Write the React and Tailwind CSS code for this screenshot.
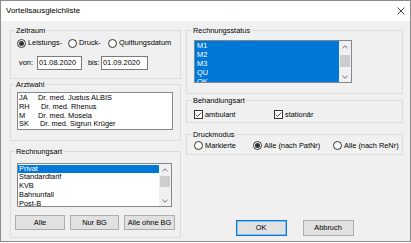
import React from "react";

const GroupBox = ({ title, className = "", pl = "pl-[6px]", children }) => (
  <fieldset className={`border border-[#dcdcdc] ${pl} ${className}`}>
    <legend className="ml-[-2px] px-[1px] leading-[9px]">{title}</legend>
    {children}
  </fieldset>
);

const Radio = ({ checked }) => (
  <span className="w-[9px] h-[9px] rounded-full border border-[#333] bg-white flex items-center justify-center shrink-0">
    {checked && <span className="w-[5px] h-[5px] rounded-full bg-[#333]" />}
  </span>
);

const RadioItem = ({ checked, label, className = "" }) => (
  <div className={`flex items-center gap-[2px] ${className}`}>
    <Radio checked={checked} />
    <span>{label}</span>
  </div>
);

const CheckItem = ({ label, className = "" }) => (
  <div className={`flex items-center gap-[2px] ${className}`}>
    <span className="w-[9px] h-[9px] border border-[#333] bg-white flex items-center justify-center shrink-0">
      <svg width="7" height="7" viewBox="0 0 7 7">
        <polyline points="0.8,3.6 2.6,5.4 6.2,1.6" fill="none" stroke="#333" strokeWidth="0.9" />
      </svg>
    </span>
    <span>{label}</span>
  </div>
);

const TextBox = ({ value, className = "" }) => (
  <div className={`h-[14px] bg-white border border-[#7a7a7a] flex items-center pl-[1px] ${className}`}>
    {value}
  </div>
);

const Button = ({ label, primary, className = "" }) => (
  <button
    className={`bg-[#e1e1e1] border flex items-center justify-center ${
      primary ? "border-[#0078d7] shadow-[inset_0_0_0_1px_#8cc0ec]" : "border-[#adadad]"
    } ${className}`}
  >
    {label}
  </button>
);

const Chevron = ({ up }) => (
  <svg width="6" height="4" viewBox="0 0 6 4">
    <polyline
      points={up ? "0.5,3.2 3,0.8 5.5,3.2" : "0.5,0.8 3,3.2 5.5,0.8"}
      fill="none"
      stroke="#606060"
      strokeWidth="0.9"
    />
  </svg>
);

const ScrollBar = ({ thumbMt, thumbH }) => (
  <div className="w-[12px] bg-[#f0f0f0] flex flex-col items-center">
    <div className="h-[11px] flex items-center justify-center">
      <Chevron up />
    </div>
    <div className="w-[10px] bg-[#cdcdcd]" style={{ marginTop: thumbMt, height: thumbH }} />
    <div className="flex-1" />
    <div className="h-[10px] flex items-center justify-center">
      <Chevron />
    </div>
  </div>
);

const doctors = [
  { code: "JA", name: "Dr. med. Justus ALBIS", ml: "ml-0" },
  { code: "RH", name: "Dr. med. Rhenus", ml: "ml-[3px]" },
  { code: "M", name: "Dr. med. Mosela", ml: "ml-0" },
  { code: "SK", name: "Dr. med. Sigrun Krüger", ml: "ml-[2px]" },
];

const arten = ["Privat", "Standardtarif", "KVB", "Bahnunfall", "Post-B"];
const status = ["M1", "M2", "M3", "QU", "OK"];

export default function App() {
  return (
    <div className="w-[411px] h-[242px] border border-[#8c8c8c] flex flex-col bg-[#f0f0f0] text-black text-[7.4px] font-['Liberation_Sans',Arial,sans-serif]">
      <div className="h-[20px] bg-white flex items-center justify-between pl-[5px] pr-[5px]">
        <span className="text-[8px]">Vorteilsausgleichliste</span>
        <svg width="8" height="8" viewBox="0 0 8 8">
          <path d="M0.5 0.5 L7.5 7.5 M7.5 0.5 L0.5 7.5" stroke="#333" strokeWidth="0.9" />
        </svg>
      </div>

      <div className="flex-1 flex gap-[5px] pl-[9px] pt-[5px] pb-[3px]">
        {/* left column */}
        <div className="w-[171px] flex flex-col">
          <GroupBox title="Zeitraum" className="h-[53px]">
            <div className="flex items-center h-[10px] mt-[3px]">
              <RadioItem checked label="Leistungs-" className="w-[51px]" />
              <RadioItem label="Druck-" className="w-[40px]" />
              <RadioItem label="Quittungsdatum" />
            </div>
            <div className="flex items-center h-[14px] mt-[8px]">
              <span className="w-[18px] ml-[2px]">von:</span>
              <TextBox value="01.08.2020" className="w-[45px]" />
              <span className="ml-[6px] w-[13px]">bis:</span>
              <TextBox value="01.09.2020" className="w-[47px]" />
            </div>
          </GroupBox>

          <GroupBox title="Arztwahl" className="h-[61px] mt-[1px]">
            <div className="mt-[3px] w-[156px] h-[38px] bg-white border border-[#828790] pt-[1px] pl-[1px] leading-[8.8px]">
              {doctors.map((d) => (
                <div key={d.code} className="flex">
                  <span className="w-[19px]">{d.code}</span>
                  <span className={d.ml}>{d.name}</span>
                </div>
              ))}
            </div>
          </GroupBox>

          <GroupBox title="Rechnungsart" className="h-[91px] mt-[6px]">
            <div className="mt-[7px] w-[155px] h-[44px] bg-white border border-[#828790] flex overflow-hidden">
              <div className="flex-1 leading-[8.8px] pt-[0.5px]">
                {arten.map((a, i) => (
                  <div key={a} className={`pl-[1px] ${i === 0 ? "bg-[#0078d7] text-white" : ""}`}>
                    {a}
                  </div>
                ))}
              </div>
              <ScrollBar thumbMt={1} thumbH={11} />
            </div>
            <div className="flex gap-[5px] ml-[-2px] mt-[8px]">
              <Button label="Alle" className="w-[50px] h-[15px]" />
              <Button label="Nur BG" className="w-[49px] h-[15px]" />
              <Button label="Alle ohne BG" className="w-[51px] h-[15px]" />
            </div>
          </GroupBox>
        </div>

        {/* right column */}
        <div className="w-[217px] flex flex-col">
          <GroupBox title="Rechnungsstatus" pl="pl-[7px]" className="h-[68px]">
            <div className="mt-[5px] w-[158px] h-[43px] bg-white border border-[#828790] flex overflow-hidden">
              <div className="flex-1 bg-[#0078d7] text-white leading-[9px] pl-[2px]">
                {status.map((s) => (
                  <div key={s}>{s}</div>
                ))}
              </div>
              <ScrollBar thumbMt={3} thumbH={12} />
            </div>
          </GroupBox>

          <GroupBox title="Behandlungsart" pl="pl-[7px]" className="h-[27px] mt-[2px]">
            <div className="flex items-center h-[9px] mt-[5px]">
              <CheckItem label="ambulant" className="w-[80px]" />
              <CheckItem label="stationär" />
            </div>
          </GroupBox>

          <GroupBox title="Druckmodus" pl="pl-[7px]" className="h-[25px] mt-[7px]">
            <div className="flex items-center h-[9px] mt-[2px]">
              <RadioItem label="Markierte" className="w-[59px]" />
              <RadioItem checked label="Alle (nach PatNr)" className="w-[80px]" />
              <RadioItem label="Alle (nach ReNr)" />
            </div>
          </GroupBox>

          <div className="mt-auto mb-[2px] flex justify-center gap-[16px]">
            <Button label="OK" primary className="w-[51px] h-[16px]" />
            <Button label="Abbruch" className="w-[51px] h-[16px]" />
          </div>
        </div>
      </div>
    </div>
  );
}
